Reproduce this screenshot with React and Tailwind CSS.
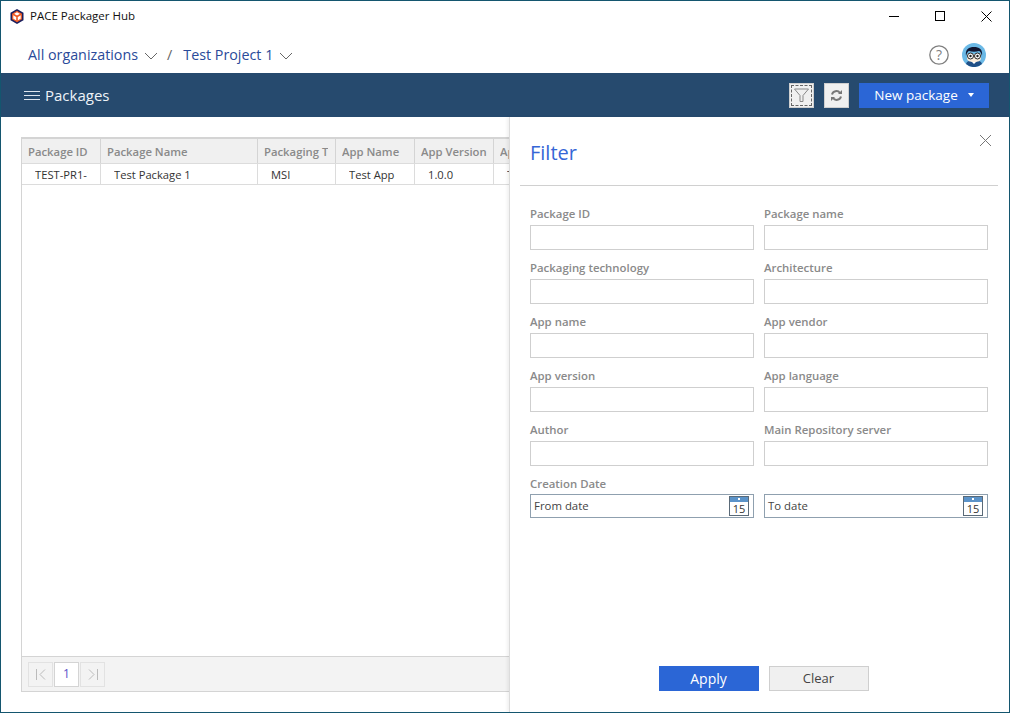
import React from "react";

const FONT = "font-['Open_Sans','Noto_Sans',sans-serif]";

const columns = [
  { label: "Package ID", width: "w-[79px]", cell: "TEST-PR1-1", clip: "mr-[12px]", headClip: "mr-[4px]" },
  { label: "Package Name", width: "w-[157px]", cell: "Test Package 1", clip: "mr-[4px]", headClip: "mr-[4px]" },
  { label: "Packaging Technology", width: "w-[78px]", cell: "MSI", clip: "mr-[4px]", headClip: "mr-[7px]" },
  { label: "App Name", width: "w-[79px]", cell: "Test App", clip: "mr-[4px]", headClip: "mr-[4px]" },
  { label: "App Version", width: "w-[79px]", cell: "1.0.0", clip: "mr-[4px]", headClip: "mr-[1px]" },
  { label: "App Vendor", width: "w-[79px]", cell: "Test", clip: "mr-[4px]", headClip: "mr-[4px]" },
];

const fields = [
  "Package ID",
  "Package name",
  "Packaging technology",
  "Architecture",
  "App name",
  "App vendor",
  "App version",
  "App language",
  "Author",
  "Main Repository server",
];

const Chevron = () => (
  <svg width="14" height="8" viewBox="0 0 14 8" fill="none" stroke="#666" strokeWidth="1">
    <path d="M1 1l6 6 6-6" />
  </svg>
);

const CalendarIcon = () => (
  <svg width="20" height="20" viewBox="0 0 20 20" className="shrink-0">
    <rect x="0.5" y="0.5" width="19" height="19" fill="#fff" stroke="#5a6a78" />
    <rect x="1" y="1" width="18" height="5" fill="#5b93c9" />
    <rect x="9" y="2" width="2" height="2" fill="#fff" />
    <text x="10" y="17" textAnchor="middle" fontSize="11" fill="#333" fontFamily="Open Sans, sans-serif">
      15
    </text>
  </svg>
);

const Avatar = () => (
  <svg width="24" height="24" viewBox="0 0 24 24">
    <circle cx="12" cy="12" r="12" fill="#6bb9e6" />
    <path d="M4 21c1-3 4-4 8-4s7 1 8 4a12 12 0 0 1-16 0z" fill="#1f4f86" />
    <path d="M8 17h8l-4 4z" fill="#fff" />
    <path d="M5 11h14v4c0 3-3 4-7 4s-7-1-7-4z" fill="#fbeedd" />
    <path d="M4 13c-1-7 3-9 8-9s9 2 8 9l-1-3c-1-1-1-2-2-2-3 1-7 1-10 0-1 0-1 1-2 2z" fill="#0f1530" />
    <circle cx="8.500" cy="13" r="3" fill="#fff" stroke="#222" />
    <circle cx="15.500" cy="13" r="3" fill="#fff" stroke="#222" />
    <circle cx="8.500" cy="13" r="1.200" fill="#222" />
    <circle cx="15.500" cy="13" r="1.200" fill="#222" />
  </svg>
);

const Field = ({ label }) => (
  <div className="flex flex-col">
    <label className="h-[24px] pt-[5px] text-[11.400px] font-semibold leading-[16px] text-[#8a8a8a]">{label}</label>
    <input className="h-[25px] border border-[#cfcfcf] bg-white outline-none" />
  </div>
);

const DateField = ({ text }) => (
  <div className="flex h-[24px] items-center justify-between border border-[#8fa0af] bg-white pl-[3px] pr-[4px]">
    <span className="text-[11.400px] text-[#444]">{text}</span>
    <CalendarIcon />
  </div>
);

export default function App() {
  return (
    <div className={`${FONT} relative flex h-[713px] w-[1010px] flex-col overflow-hidden border border-[#14566f] bg-white`}>
      {/* title bar */}
      <div className="flex h-[30px] shrink-0 items-center justify-between">
        <div className="flex items-center pl-[9px]">
          <svg width="14" height="15" viewBox="0 0 14 15">
            <path d="M7 0l6.500 3.700v7.600L7 15 .5 11.300V3.700z" fill="#1b1f5e" />
            <path d="M7 2.500l4.300 2.500v5L7 12.500 2.700 10V5z" fill="#fff" />
            <path d="M7 2.500l4.300 2.500v5L7 12.500 2.700 10V5z" fill="none" stroke="#ef5a24" strokeWidth="1.200" />
            <path d="M2.700 5L7 7.500 11.300 5M7 7.500v5" fill="none" stroke="#ef5a24" strokeWidth="1.600" />
          </svg>
          <span className="ml-[6px] text-[11.500px] text-[#111]">PACE Packager Hub</span>
        </div>
        <div className="flex items-center">
          <div className="flex w-[46px] justify-center">
            <div className="h-px w-[10px] bg-black" />
          </div>
          <div className="flex w-[46px] justify-center">
            <div className="h-[10px] w-[10px] border border-black" />
          </div>
          <div className="flex w-[46px] justify-center">
            <svg width="11" height="11" viewBox="0 0 11 11" stroke="#000" strokeWidth="1">
              <path d="M.5.500l10 10M10.500.500l-10 10" />
            </svg>
          </div>
        </div>
      </div>

      {/* breadcrumb */}
      <div className="flex h-[42px] shrink-0 items-center justify-between pl-[27px] pr-[23px] pt-[6px]">
        <div className="flex items-center text-[14.300px] text-[#2a4a9a]">
          <span>All organizations</span>
          <span className="ml-[6px] mt-[2px]">
            <Chevron />
          </span>
          <span className="ml-[9px] text-[#666]">/</span>
          <span className="ml-[11px]">Test Project 1</span>
          <span className="ml-[6px] mt-[2px]">
            <Chevron />
          </span>
        </div>
        <div className="flex items-center gap-[13px]">
          <svg width="20" height="20" viewBox="0 0 20 20">
            <circle cx="10" cy="10" r="9.200" fill="none" stroke="#808080" strokeWidth="1.300" />
            <text x="10" y="15" textAnchor="middle" fontSize="14" fill="#808080" fontFamily="Open Sans, sans-serif">
              ?
            </text>
          </svg>
          <Avatar />
        </div>
      </div>

      {/* toolbar */}
      <div className="flex h-[44px] shrink-0 items-center justify-between bg-[#264a6e] pl-[23px] pr-[20px]">
        <div className="flex items-center">
          <div className="flex w-[16px] flex-col gap-[3px]">
            <div className="h-px bg-[#dfe6ee]" />
            <div className="h-px bg-[#dfe6ee]" />
            <div className="h-px bg-[#dfe6ee]" />
          </div>
          <span className="ml-[5px] text-[15px] text-[#eef3f8]">Packages</span>
        </div>
        <div className="flex items-center">
          <button className="flex h-[25px] w-[25px] items-center justify-center border border-[#cfcfcf] bg-[#f0f0f0] p-[1px]">
            <span className="flex h-full w-full items-center justify-center border border-dashed border-[#666]">
              <svg width="15" height="15" viewBox="0 0 15 15" fill="none" stroke="#888" strokeWidth="1">
                <path d="M.5 1h14L9 7.500v6H6V7.500z" />
              </svg>
            </span>
          </button>
          <button className="ml-[10px] flex h-[25px] w-[25px] items-center justify-center border border-[#cfcfcf] bg-[#f0f0f0]">
            <svg width="13" height="13" viewBox="0 0 13 13" fill="none" stroke="#777" strokeWidth="2">
              <path d="M2 5.500a4.500 4.500 0 0 1 8-1.500" />
              <path d="M11 7.500a4.500 4.500 0 0 1-8 1.500" />
              <path d="M12 1v4H8z" fill="#777" stroke="none" />
              <path d="M1 12V8h4z" fill="#777" stroke="none" />
            </svg>
          </button>
          <button className="ml-[10px] flex h-[25px] w-[130px] items-center justify-center bg-[#2b66d6] text-[13.500px] text-white">
            New package
            <span className="ml-[10px] h-0 w-0 border-x-[3.500px] border-t-[4px] border-x-transparent border-t-white" />
          </button>
        </div>
      </div>

      {/* table */}
      <div className="flex min-h-0 grow px-[20px] pb-[20px] pt-[20px]">
        <div className="flex w-full flex-col border border-t-2 border-[#d4d4d4]">
          <div className="flex h-[24px] shrink-0 bg-[#f0f0f0]">
            {columns.map((col) => (
              <div key={col.label} className={`${col.width} shrink-0 border-r border-[#d4d4d4] pl-[6px]`}>
                <div className={`${col.headClip} overflow-hidden whitespace-nowrap text-[11.300px] font-semibold leading-[25px] text-[#8a8a8a]`}>
                  {col.label}
                </div>
              </div>
            ))}
          </div>
          <div className="flex h-[22px] shrink-0 border-y border-[#dcdcdc]">
            {columns.map((col) => (
              <div key={col.label} className={`${col.width} shrink-0 border-r border-[#dcdcdc] pl-[13px] pt-[1px]`}>
                <div className={`${col.clip} overflow-hidden whitespace-nowrap text-[11.200px] leading-[19px] text-[#333]`}>
                  {col.cell}
                </div>
              </div>
            ))}
          </div>
          <div className="grow" />
          <div className="flex h-[35px] shrink-0 items-center gap-px border-t border-[#d4d4d4] bg-[#f3f3f3] pl-[6px]">
            <div className="flex h-[25px] w-[25px] items-center justify-center border border-[#e2e2e2]">
              <svg width="10" height="11" viewBox="0 0 10 11" fill="none" stroke="#bbb">
                <path d="M.5 0v11M9 .5l-5 5 5 5" />
              </svg>
            </div>
            <div className="flex h-[25px] w-[25px] items-center justify-center border border-[#d4d4d4] bg-white text-[12px] text-[#5a50c8]">
              1
            </div>
            <div className="flex h-[25px] w-[25px] items-center justify-center border border-[#e2e2e2]">
              <svg width="10" height="11" viewBox="0 0 10 11" fill="none" stroke="#bbb">
                <path d="M9.500 0v11M1 .5l5 5-5 5" />
              </svg>
            </div>
          </div>
        </div>
      </div>

      {/* filter panel, slides over the table */}
      <div className="absolute bottom-0 right-0 top-[116px] flex w-[500px] flex-col border-l border-[#dcdcdc] bg-white shadow-[-2px_0_3px_rgba(0,0,0,0.06)]">
        <div className="relative ml-[10px] mr-[11px] h-[69px] shrink-0 border-b border-[#d0d0d0] pl-[10px] pt-[20px] text-[20px] leading-[32px] text-[#3566d6]">
          Filter
          <button className="absolute right-[6px] top-[17px]">
            <svg width="13" height="13" viewBox="0 0 13 13" stroke="#777" strokeWidth="1">
              <path d="M1 1l11 11M12 1L1 12" />
            </svg>
          </button>
        </div>
        <div className="grid grid-cols-[224px_224px] gap-x-[10px] gap-y-[5px] pl-[20px] pt-[15px]">
          {fields.map((f) => (
            <Field key={f} label={f} />
          ))}
        </div>
        <div className="h-[23px] pl-[20px] pt-[10px] text-[11.400px] font-semibold leading-[16px] text-[#8a8a8a]">
          Creation Date
        </div>
        <div className="mt-[5px] grid grid-cols-[224px_224px] gap-x-[10px] pl-[20px]">
          <DateField text="From date" />
          <DateField text="To date" />
        </div>
        <div className="mt-auto flex justify-center gap-[10px] pb-[21px] pl-[8px]">
          <button className="h-[25px] w-[100px] bg-[#2b66d6] text-[14px] text-white">Apply</button>
          <button className="h-[25px] w-[100px] border border-[#cfcfcf] bg-[#f0f0f0] text-[13px] text-[#444]">Clear</button>
        </div>
      </div>
    </div>
  );
}
